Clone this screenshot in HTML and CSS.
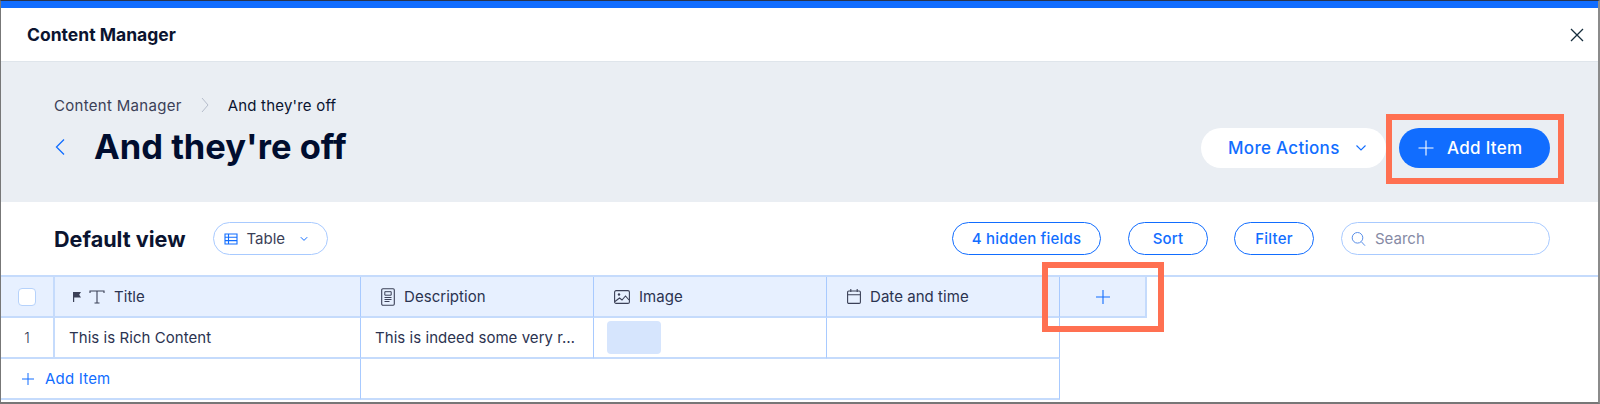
FILE: index.html
```html
<!DOCTYPE html>
<html lang="en">
<head>
<meta charset="utf-8">
<title>Content Manager</title>
<link rel="stylesheet" href="styles.css">
</head>
<body>
<div class="frame">
  <div class="accent"></div>
  <header class="topbar">
    <span class="app-name">Content Manager</span>
    <svg class="close" width="14" height="14" viewBox="0 0 14 14"><path d="M1 1l12 12M13 1L1 13" fill="none" stroke="#162d3d" stroke-width="1.3"/></svg>
  </header>
  <section class="hero">
    <div class="hero-left">
      <nav class="crumbs">
        <span class="crumb">Content Manager</span>
        <svg width="10" height="16" viewBox="0 0 10 16"><path d="M2 1l6 7-6 7" fill="none" stroke="#b6bdcb" stroke-width="1"/></svg>
        <span class="crumb current">And they're off</span>
      </nav>
      <div class="title-row">
        <svg class="back" width="12" height="18" viewBox="0 0 12 18"><path d="M10 1.5L2.5 9l7.500 7.500" fill="none" stroke="#116dff" stroke-width="1.300"/></svg>
        <h1>And they're off</h1>
      </div>
    </div>
    <div class="hero-actions">
      <button class="btn-more">More Actions
        <svg width="12" height="8" viewBox="0 0 12 8"><path d="M1.500 1.500L6 6l4.500-4.500" fill="none" stroke="#116dff" stroke-width="1.100"/></svg>
      </button>
      <button class="btn-add">
        <svg width="16" height="16" viewBox="0 0 16 16"><path d="M8 .5v15M.5 8h15" fill="none" stroke="#fff" stroke-width="1.100"/></svg>
        Add Item
      </button>
    </div>
  </section>
  <section class="panel">
    <div class="toolbar">
      <h2>Default view</h2>
      <button class="view-select">
        <svg width="14" height="12" viewBox="0 0 14 12"><path d="M1 1h12v10H1zM1 4.300h12M1 7.600h12M4.500 1v10" fill="none" stroke="#116dff" stroke-width="1.100"/></svg>
        <span>Table</span>
        <svg width="8" height="6" viewBox="0 0 8 6"><path d="M.8 1.200L4 4.400l3.200-3.200" fill="none" stroke="#116dff" stroke-width="1"/></svg>
      </button>
      <div class="tools">
        <button class="pill pill-fields">4 hidden fields</button>
        <button class="pill pill-sort">Sort</button>
        <button class="pill pill-filter">Filter</button>
        <div class="search">
          <svg width="15" height="16" viewBox="0 0 15 16"><circle cx="6.500" cy="6.800" r="5.300" fill="none" stroke="#5a8fe8" stroke-width="1"/><path d="M10.300 10.700l3.700 4" fill="none" stroke="#5a8fe8" stroke-width="1"/></svg>
          <span>Search</span>
        </div>
      </div>
    </div>
    <div class="table-wrap">
      <div class="table">
        <div class="cell head check-cell"><span class="checkbox"></span></div>
        <div class="cell head title-head">
          <svg class="ico" width="10" height="12" viewBox="0 0 10 12"><path d="M1 1h8L7.200 3.700 9 6.500H2.200V11H1z" fill="#3b4057"/></svg>
          <svg class="ico t-ico" width="16" height="14" viewBox="0 0 16 14"><path d="M1 3V1h14v2M8 1v12M5.500 13h5" fill="none" stroke="#3b4057" stroke-width="1.100"/></svg>
          <span>Title</span>
        </div>
        <div class="cell head">
          <svg class="ico" width="14" height="18" viewBox="0 0 14 18"><rect x=".7" y=".7" width="12.600" height="16.600" rx="1.200" fill="none" stroke="#3b4057" stroke-width="1.100"/><path d="M3.800 3.700h6.400v3.500H3.800zM3.500 9.500h7M3.500 11.500h7M3.500 13.500h5" fill="none" stroke="#3b4057" stroke-width="1"/></svg>
          <span>Description</span>
        </div>
        <div class="cell head">
          <svg class="ico" width="16" height="14" viewBox="0 0 16 14"><rect x=".6" y=".6" width="14.800" height="12.800" rx="1.500" fill="none" stroke="#3b4057" stroke-width="1.100"/><circle cx="5" cy="4.500" r="1.200" fill="#3b4057"/><path d="M1 11.500l4.500-3.500 2.500 2 3.500-4 3.500 4" fill="none" stroke="#3b4057" stroke-width="1.100"/></svg>
          <span>Image</span>
        </div>
        <div class="cell head">
          <svg class="ico" width="14" height="15" viewBox="0 0 14 15"><rect x=".6" y="2" width="12.800" height="12.400" rx="1.200" fill="none" stroke="#3b4057" stroke-width="1.100"/><path d="M.6 5.800h12.800M3.800 0v3M10.200 0v3" fill="none" stroke="#3b4057" stroke-width="1.100"/></svg>
          <span>Date and time</span>
        </div>
        <div class="cell head add-col">
          <svg width="14" height="14" viewBox="0 0 14 14"><path d="M7 0v14M0 7h14" fill="none" stroke="#116dff" stroke-width="1.100"/></svg>
        </div>
        <div class="cell row-num">1</div>
        <div class="cell body-cell">This is Rich Content</div>
        <div class="cell body-cell">This is indeed some very r…</div>
        <div class="cell thumb-cell"><span class="thumb"></span></div>
        <div class="cell body-cell"></div>
        <div class="cell add-row">
          <svg width="12" height="12" viewBox="0 0 12 12"><path d="M6 0v12M0 6h12" fill="none" stroke="#116dff" stroke-width="1"/></svg>
          <span>Add Item</span>
        </div>
        <div class="cell add-rest"></div>
      </div>
    </div>
  </section>
  <div class="mark mark-add"></div>
  <div class="mark mark-col"></div>
</div>
</body>
</html>
```
FILE: styles.css
```css
* { box-sizing: border-box; }
html, body { margin: 0; padding: 0; }
body {
  width: 1600px;
  height: 404px;
  overflow: hidden;
  background: #fff;
  font-family: Inter, "Liberation Sans", sans-serif;
  color: #162d3d;
}
button { font-family: inherit; cursor: pointer; }
.frame {
  position: relative;
  width: 1600px;
  height: 404px;
  display: flex;
  flex-direction: column;
  border-top: 1px solid #27344f;
  border-left: 1px solid #777;
  border-right: 2px solid #8b8b8b;
  border-bottom: 2px solid #777;
  overflow: hidden;
}
.accent { height: 7px; background: #116dff; flex: none; }
.topbar {
  flex: none;
  height: 54px;
  display: flex;
  align-items: center;
  justify-content: space-between;
  padding: 0 14px 0 26px;
  border-bottom: 1px solid #dfe5eb;
  background: #fff;
}
.app-name { font-size: 17.500px; font-weight: 700; color: #0b1430; }
.hero {
  flex: none;
  height: 140px;
  background: #eaeef3;
  display: flex;
  justify-content: space-between;
  padding: 33px 48px 0 53px;
}
.crumbs { display: flex; align-items: center; gap: 18px; height: 20px; }
.crumb { font-size: 15px; letter-spacing: .3px; color: #3b4057; }
.crumb.current { color: #0b1430; letter-spacing: .2px; }
.title-row { display: flex; align-items: center; margin-top: 9px; height: 46px; }
.back { margin-right: 28px; }
h1 { margin: 0; font-size: 34.500px; line-height: 46px; font-weight: 700; color: #000d2f; }
.hero-actions { display: flex; align-items: flex-start; gap: 13px; padding-top: 33px; }
.btn-more, .btn-add {
  height: 40px;
  border: 0;
  border-radius: 20px;
  font-size: 17px;
  letter-spacing: .3px;
  font-weight: 500;
  display: flex;
  align-items: center;
}
.btn-more { width: 185px; background: #fff; color: #116dff; padding: 0 0 0 27px; gap: 15px; }
.btn-add { width: 151px; background: #116dff; color: #fff; padding: 0 0 0 19px; gap: 13px; }
.panel { flex: 1; background: #fff; border-radius: 6px 6px 0 0; display: flex; flex-direction: column; min-height: 0; }
.toolbar { flex: none; height: 73px; display: flex; align-items: center; padding: 0 48px 0 53px; }
h2 { margin: 0; font-size: 21.600px; font-weight: 700; color: #0b1430; line-height: 24px; }
.view-select {
  margin-left: 27px;
  width: 115px;
  height: 33px;
  border: 1px solid #a8caff;
  border-radius: 17px;
  background: #fff;
  display: flex;
  align-items: center;
  padding: 0 0 0 10px;
  font-size: 15px;
  color: #3b4057;
}
.view-select span { margin: 0 15px 0 9px; }
.tools { margin-left: auto; display: flex; align-items: center; }
.pill {
  height: 33px;
  border: 1px solid #116dff;
  border-radius: 17px;
  background: #fff;
  color: #116dff;
  font-size: 15px;
  letter-spacing: .2px;
  font-weight: 500;
  padding: 0;
}
.pill-fields { width: 149px; margin-right: 27px; }
.pill-sort { width: 80px; margin-right: 26px; }
.pill-filter { width: 80px; margin-right: 27px; }
.search {
  width: 209px;
  height: 33px;
  border: 1px solid #a8caff;
  border-radius: 17px;
  display: flex;
  align-items: center;
  gap: 9px;
  padding-left: 9px;
  font-size: 15px;
  color: #868aa5;
}
.table-wrap { flex: 1; border-top: 2px solid #c5dbfc; min-height: 0; }
.table {
  display: grid;
  grid-template-columns: 54px 306px 233px 233px 233px 87px;
  grid-template-rows: 41px 41px 41px;
  width: 1146px;
}
.cell {
  display: flex;
  align-items: center;
  font-size: 15px;
  letter-spacing: .05px;
  color: #2b3350;
  border-right: 1px solid #a8caff;
  border-bottom: 2px solid #c5dbfc;
  min-width: 0;
}
.head { background: #e7f0ff; padding-left: 20px; gap: 9px; }
.head .ico { flex: none; }
.check-cell { padding: 0; justify-content: center; border-right-width: 2px; border-right-color: #c5dbfc; }
.checkbox { width: 18px; height: 18px; background: #fff; border: 1.500px solid #b6d2fb; border-radius: 4px; }
.title-head { padding-left: 17px; gap: 0; }
.title-head .t-ico { margin: 0 9px 0 7px; }
.add-col { padding: 0; justify-content: center; border-right: 2px solid #c5dbfc; }
.row-num { justify-content: center; border-right-width: 2px; border-right-color: #c5dbfc; font-size: 14px; font-weight: 300; }
.body-cell { padding-left: 14px; }
.thumb-cell { padding-left: 13px; }
.thumb { width: 54px; height: 33px; background: #d6e5fd; border-radius: 4px; }
.add-row {
  grid-column: 1 / 3;
  grid-row: 3;
  color: #116dff;
  padding-left: 21px;
  gap: 11px;
  letter-spacing: .2px;
}
.add-rest { grid-column: 3 / 6; grid-row: 3; }
.mark { position: absolute; border: 6px solid #ff7051; pointer-events: none; }
.mark-add { left: 1385px; top: 113px; width: 178px; height: 70px; }
.mark-col { left: 1041px; top: 261px; width: 122px; height: 70px; }
```
